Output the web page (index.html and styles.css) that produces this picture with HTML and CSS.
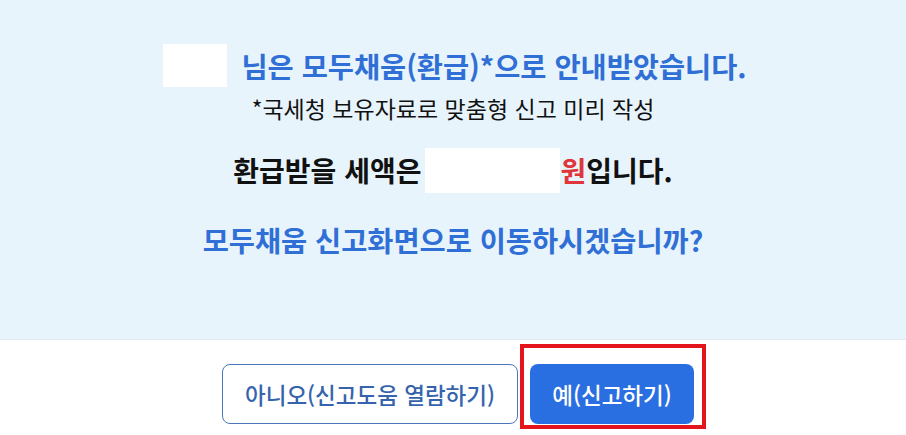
FILE: index.html
```html
<!DOCTYPE html>
<html lang="ko">
<head>
    <meta charset="UTF-8">
    <meta name="viewport" content="width=device-width, initial-scale=1.0">
    <title>모두채움 안내</title>
    <link rel="stylesheet" href="styles.css">
</head>
<body>
    <div class="notice">
        <p class="title"><span class="mask name"></span>님은 모두채움(환급)*으로 안내받았습니다.</p>
        <p class="note">*국세청 보유자료로 맞춤형 신고 미리 작성</p>
        <p class="amount">환급받을 세액은<span class="mask money"></span><span class="won">원</span>입니다.</p>
        <p class="question">모두채움 신고화면으로 이동하시겠습니까?</p>
    </div>
    <div class="actions">
        <button class="btn btn-line">아니오(신고도움 열람하기)</button>
        <span class="mark"><button class="btn btn-main">예(신고하기)</button></span>
    </div>
</body>
</html>
```

FILE: styles.css
```css
body { margin: 0; font-family: "Noto Sans CJK KR", "Noto Sans", sans-serif; background: #fff; }
.notice { height: 340px; box-sizing: border-box; padding-top: 44px; background: #e8f4fb; text-align: center; border-bottom: 1px solid #dfeaf1; }
.notice p { margin: 0; }
.title { padding-left: 4px; font-size: 28.4px; font-weight: bold; color: #2f6fd6; line-height: 43px; }
.note { margin-top: 8px !important; font-size: 23px; color: #111; line-height: 26px; }
.amount { margin-top: 27px !important; font-size: 28px; font-weight: bold; color: #111; line-height: 45px; }
.question { margin-top: 31px !important; font-size: 28.4px; font-weight: bold; color: #2f6fd6; line-height: 32px; }
.mask { display: inline-block; background: #fff; vertical-align: top; }
.name { width: 64px; height: 43px; margin-right: 14px; }
.money { width: 135px; height: 45px; margin: 0 0 0 4px; }
.won { color: #e0353a; }
.actions { display: flex; justify-content: center; gap: 12px; padding: 24px 0 11px 10px; }
.btn { height: 60px; border-radius: 8px; font-family: inherit; font-size: 22.5px; font-weight: 500; padding: 0; cursor: pointer; }
.btn-line { width: 296px; background: #fff; color: #3564ad; border: 1px solid #4a76bd; }
.btn-main { width: 164px; background: #2a6fe2; color: #fff; border: none; }
.mark { position: relative; display: inline-block; }
.mark::after { content: ""; position: absolute; left: -10px; right: -12px; top: -20px; bottom: -5px; border: 4px solid #e3141b; }
```
